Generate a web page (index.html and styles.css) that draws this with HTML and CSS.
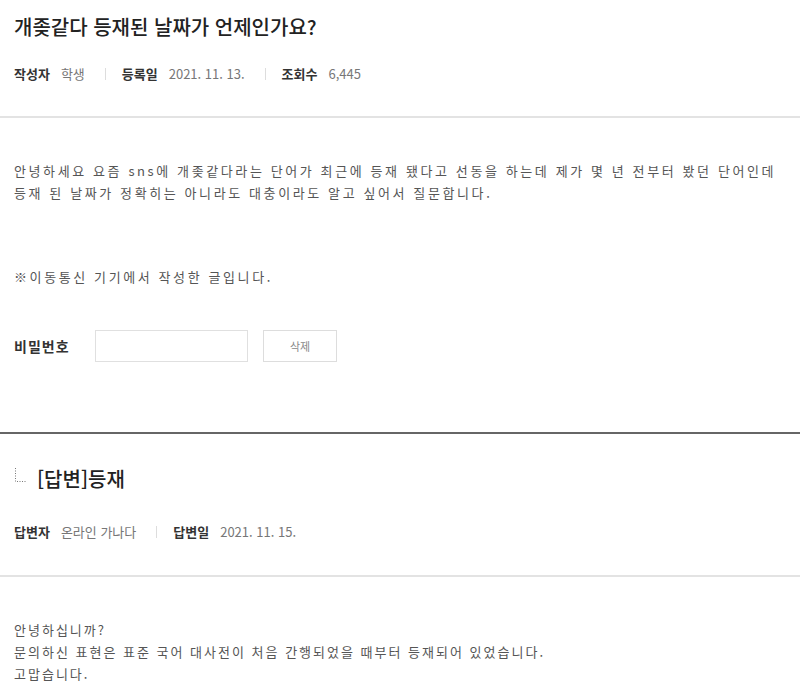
FILE: index.html
```html
<!DOCTYPE html>
<html lang="ko">
<head>
    <meta charset="UTF-8">
    <meta name="viewport" content="width=device-width, initial-scale=1.0">
    <title>개좆같다 등재된 날짜가 언제인가요?</title>
    <link rel="stylesheet" href="styles.css">
</head>
<body>
    <!-- 질문 -->
    <div class="post">
        <h1 class="title">개좆같다 등재된 날짜가 언제인가요?</h1>
        <ul class="meta">
            <li><b>작성자</b><span>학생</span></li>
            <li><b>등록일</b><span>2021. 11. 13.</span></li>
            <li><b>조회수</b><span>6,445</span></li>
        </ul>
    </div>
    <div class="content">
        <p>안녕하세요 요즘 sns에 개좆같다라는 단어가 최근에 등재 됐다고 선동을 하는데 제가 몇 년 전부터 봤던 단어인데<br>등재 된 날짜가 정확히는 아니라도 대충이라도 알고 싶어서 질문합니다.</p>
        <p class="notice">※이동통신 기기에서 작성한 글입니다.</p>
        <div class="pw">
            <label for="pw">비밀번호</label>
            <input type="password" id="pw">
            <button class="button">삭제</button>
        </div>
    </div>

    <!-- 답변 -->
    <div class="post answer">
        <h2 class="title">
            <svg class="reply" width="14" height="16" viewBox="0 0 14 16">
                <path d="M1.5 1v13.5H13" fill="none" stroke="#777" stroke-width="1" stroke-dasharray="1 1.5"/>
            </svg>
            [답변]등재
        </h2>
        <ul class="meta">
            <li><b>답변자</b><span>온라인 가나다</span></li>
            <li><b>답변일</b><span>2021. 11. 15.</span></li>
        </ul>
    </div>
    <div class="content reply-text">
        <p>안녕하십니까?<br>문의하신 표현은 표준 국어 대사전이 처음 간행되었을 때부터 등재되어 있었습니다.<br>고맙습니다.</p>
    </div>
</body>
</html>
```

FILE: styles.css
```css
body {
    font-family: "Noto Sans CJK KR", "Noto Sans", sans-serif;
    background-color: #fff;
    color: #333;
    margin: 0;
}
.post {
    padding: 12px 14px 0;
    border-bottom: 2px solid #e3e3e3;
    height: 104px;
}
.title {
    font-size: 20px;
    font-weight: 500;
    color: #222;
    margin: 0;
    line-height: 30px;
}
.meta {
    list-style: none;
    margin: 22px 0 0;
    padding: 0;
    display: flex;
    font-size: 13px;
    line-height: 20px;
}
.meta li {
    display: flex;
    gap: 11px;
}
.meta li + li {
    border-left: 1px solid #ddd;
    margin-left: 20px;
    padding-left: 16px;
    height: 12px;
    margin-top: 4px;
    align-items: center;
}
.meta b {
    font-weight: 700;
    color: #333;
}
.meta span {
    color: #777;
}
.content {
    padding: 42px 14px 0;
}
.content p {
    margin: 0;
    font-size: 13px;
    line-height: 22px;
    color: #555;
    letter-spacing: 2.6px;
}
.content .notice {
    margin-top: 62px;
}
.pw {
    display: flex;
    align-items: center;
    margin-top: 42px;
    height: 32px;
}
.pw label {
    font-size: 14px;
    font-weight: 700;
    color: #333;
    letter-spacing: 1px;
    width: 81px;
}
.pw input {
    width: 153px;
    height: 32px;
    box-sizing: border-box;
    border: 1px solid #e0e0e0;
    margin: 0 15px 0 0;
}
.button {
    width: 74px;
    height: 32px;
    background-color: #fff;
    border: 1px solid #ddd;
    font-family: inherit;
    font-size: 11px;
    color: #888;
    cursor: pointer;
}
.answer {
    margin-top: 70px;
    border-top: 2px solid #666;
    padding-top: 30px;
    height: 111px;
}
.answer .title {
    display: flex;
    align-items: center;
    gap: 9px;
}
.answer .meta {
    margin-top: 28px;
}
.reply {
    margin-top: -8px;
}
.reply-text p {
    letter-spacing: 2px;
}
```
